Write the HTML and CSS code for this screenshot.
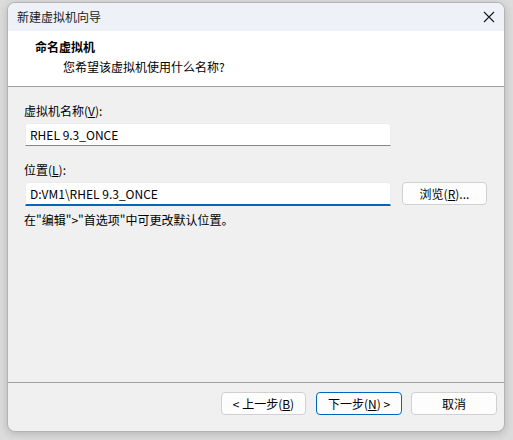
FILE: index.html
```html
<!DOCTYPE html>
<html lang="zh-CN">
<head>
<meta charset="utf-8">
<title>新建虚拟机向导</title>
<link rel="stylesheet" href="styles.css">
</head>
<body>
<div class="window">
  <div class="titlebar">
    <span class="title">新建虚拟机向导</span>
    <span class="close">
      <svg width="12" height="12" viewBox="0 0 12 12"><path d="M1 1 L11 11 M11 1 L1 11" stroke="#1a1a1a" stroke-width="1.1" fill="none"/></svg>
    </span>
  </div>
  <div class="header">
    <div class="h-title">命名虚拟机</div>
    <div class="h-sub">您希望该虚拟机使用什么名称?</div>
  </div>
  <div class="content">
    <div class="label l1">虚拟机名称(<u>V</u>):</div>
    <div class="input name">RHEL 9.3_ONCE</div>
    <div class="label l2">位置(<u>L</u>):</div>
    <div class="row">
      <div class="input loc">D:VM1\RHEL 9.3_ONCE</div>
      <div class="btn browse">浏览(<u>R</u>)...</div>
    </div>
    <div class="hint">在"编辑"&gt;"首选项"中可更改默认位置。</div>
  </div>
  <div class="footer">
    <div class="btn">&lt; 上一步(<u>B</u>)</div>
    <div class="btn primary">下一步(<u>N</u>) &gt;</div>
    <div class="btn cancel">取消</div>
  </div>
</div>
</body>
</html>
```
FILE: styles.css
```css
html, body {
  margin: 0;
  padding: 0;
}
body {
  width: 513px;
  height: 440px;
  background: #dcdcdc;
  font-family: "Noto Sans CJK SC", "Noto Sans", sans-serif;
  font-size: 12px;
  color: #000;
  overflow: hidden;
}
.window {
  margin: 2px 0 0 7px;
  width: 498px;
  height: 430px;
  box-sizing: border-box;
  border: 1px solid #b4b4b4;
  border-radius: 8px;
  background: #f0f0f0;
  overflow: hidden;
  display: flex;
  flex-direction: column;
  box-shadow: 0 2px 8px rgba(0,0,0,0.18);
}
.titlebar {
  height: 28px;
  background: #eef2f8;
  display: flex;
  align-items: center;
  justify-content: space-between;
  padding: 0 9px 0 9px;
  flex: none;
}
.title {
  line-height: 28px;
  color: #1a1a1a;
}
.close {
  display: flex;
  width: 12px;
  height: 12px;
}
.header {
  height: 56px;
  background: #fff;
  border-bottom: 1px solid #a0a0a0;
  box-sizing: border-box;
  flex: none;
  padding-top: 7px;
}
.h-title {
  font-weight: bold;
  margin-left: 27px;
  line-height: 18px;
}
.h-sub {
  margin-left: 55px;
  line-height: 18px;
  margin-top: 2px;
}
.content {
  flex: 1;
  padding: 15px 0 0 16px;
}
.label {
  line-height: 17px;
}
.l2 {
  margin-top: 15px;
}
.input {
  box-sizing: border-box;
  width: 366px;
  height: 23px;
  margin-left: 1px;
  margin-top: 4px;
  background: #fff;
  border: 1px solid #ececec;
  border-bottom: 1px solid #868686;
  border-radius: 3px 3px 0 0;
  padding-left: 4px;
  line-height: 21px;
}
.input.loc {
  height: 24px;
  border-bottom: 2px solid #0067c0;
  margin-top: 0;
}
.row {
  display: flex;
  align-items: flex-start;
  gap: 11px;
  margin-top: 4px;
}
.btn {
  box-sizing: border-box;
  height: 23px;
  width: 86px;
  border: 1px solid #d0d0d0;
  border-radius: 4px;
  background: #fdfdfd;
  display: flex;
  align-items: center;
  justify-content: center;
  line-height: 16px;
}
.browse {
  width: 85px;
}
.hint {
  margin-top: 5px;
  line-height: 17px;
}
.footer {
  flex: none;
  height: 39px;
  border-top: 1px solid #a0a0a0;
  display: flex;
  justify-content: flex-end;
  align-items: flex-start;
  gap: 9px;
  padding: 9px 7px 0 0;
}
.footer .btn:first-child {
  width: 85px;
  margin-right: 1px;
}
.primary {
  border-color: #0067c0;
}
u {
  text-decoration: underline;
  text-underline-offset: 1px;
}
```
